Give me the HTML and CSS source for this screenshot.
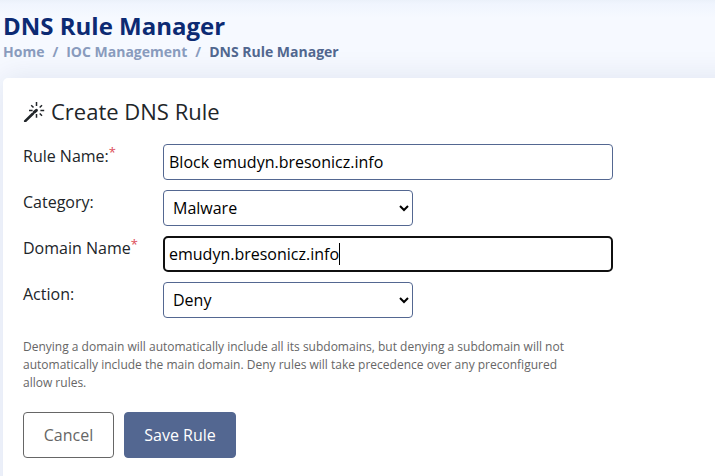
FILE: index.html
```html
<!DOCTYPE html>
<html lang="en">
<head>
<meta charset="utf-8">
<title>DNS Rule Manager</title>
<link rel="stylesheet" href="styles.css">
</head>
<body>
<header class="page-title">
  <h1>DNS Rule Manager</h1>
  <nav class="breadcrumb">
    <a>Home</a><span class="sep">/</span><a>IOC Management</a><span class="sep">/</span><span class="current">DNS Rule Manager</span>
  </nav>
</header>
<main class="card">
  <h2>
    <svg class="magic" viewBox="0 0 22 22" width="22" height="22" aria-hidden="true">
      <path class="wand" d="M2.2 21.1 9.8 13.8"/>
      <path class="tip" d="M11.3 12.2 13.4 10.3"/>
      <path class="rays" d="M13.5 2v4M13.5 14v3.8M6 10.5h3.6M17.4 10.5h3.8M8.2 5.2l2.3 2.3M19 5.2l-2.3 2.3M16.7 13.5l2.3 2.3"/>
    </svg>
    <span>Create DNS Rule</span>
  </h2>
  <form class="rule-form">
    <label for="name">Rule Name:<sup>*</sup></label>
    <input id="name" type="text" value="Block emudyn.bresonicz.info">
    <label for="category">Category:</label>
    <select id="category"><option>Malware</option></select>
    <label for="domain">Domain Name<sup>*</sup></label>
    <div id="domain" class="field-focused"><span>emudyn.bresonicz.info</span><i class="caret"></i></div>
    <label for="action">Action:</label>
    <select id="action"><option>Deny</option></select>
  </form>
  <p class="note">Denying a domain will automatically include all its subdomains, but denying a subdomain will not automatically include the main domain. Deny rules will take precedence over any preconfigured allow rules.</p>
  <div class="actions">
    <button class="btn cancel" type="button">Cancel</button>
    <button class="btn save" type="button">Save Rule</button>
  </div>
</main>
</body>
</html>
```
FILE: styles.css
```css
* { box-sizing: border-box; }
body {
  margin: 0;
  height: 476px;
  overflow: hidden;
  background: linear-gradient(#ebf1fa 0, #f0f5fe 4px, #f6f9ff 18px);
  font-family: "Open Sans", sans-serif;
  font-size: 16px;
  color: #212529;
}
.page-title { height: 78px; padding: 11px 0 0 3px; }
h1 {
  margin: 0;
  font-size: 24px;
  line-height: 30px;
  font-weight: 700;
  color: #0c2a73;
}
.breadcrumb {
  display: flex;
  font-size: 14px;
  line-height: 21px;
  font-weight: 700;
  color: #899bbd;
}
.sep { padding: 0 8px; }
.current { color: #51678f; }
.card {
  width: 800px;
  height: 440px;
  margin-left: 3px;
  padding: 19px 20px 20px;
  border-radius: 5px;
  background: #fff;
  box-shadow: 0 0 30px rgba(1, 41, 112, 0.1);
}
h2 {
  display: flex;
  align-items: center;
  gap: 6px;
  margin: 0 0 19px;
  font-size: 22px;
  line-height: 28px;
  font-weight: 400;
}
.magic { fill: none; stroke: #212529; }
.wand { stroke-width: 2.6; stroke-linecap: round; }
.tip { stroke-width: 3; stroke-linecap: round; }
.rays { stroke-width: 1.5; }
.rule-form {
  display: grid;
  grid-template-columns: 140px 450px;
  grid-auto-rows: 36px;
  row-gap: 10px;
}
label { line-height: 24px; }
sup {
  position: relative;
  top: -5px;
  font-size: 13px;
  line-height: 0;
  vertical-align: baseline;
  color: #dc4c58;
}
input, select, .field-focused {
  height: 36px;
  border: 1px solid #536791;
  border-radius: 4px;
  background: #fff;
  color: #000;
  font: 16px "Open Sans", sans-serif;
}
input { width: 450px; padding: 1px 5px; }
select { width: 250px; padding: 1px 5px; }
.field-focused {
  display: flex;
  align-items: center;
  padding: 0 4px;
  border: 2px solid #101010;
  border-radius: 5px;
}
.caret { width: 1px; height: 22px; background: #000; }
.note {
  width: 560px;
  margin: 20px 0 20px;
  font-size: 12px;
  line-height: 18px;
  color: #666;
}
.actions { display: flex; gap: 10px; }
.btn {
  height: 46px;
  border: 1px solid #666;
  border-radius: 4px;
  padding: 0;
  font: 16px "Open Sans", sans-serif;
}
.cancel { width: 91px; background: #fff; color: #666; }
.save { width: 112px; background: #536791; border-color: #536791; color: #fff; }
```
